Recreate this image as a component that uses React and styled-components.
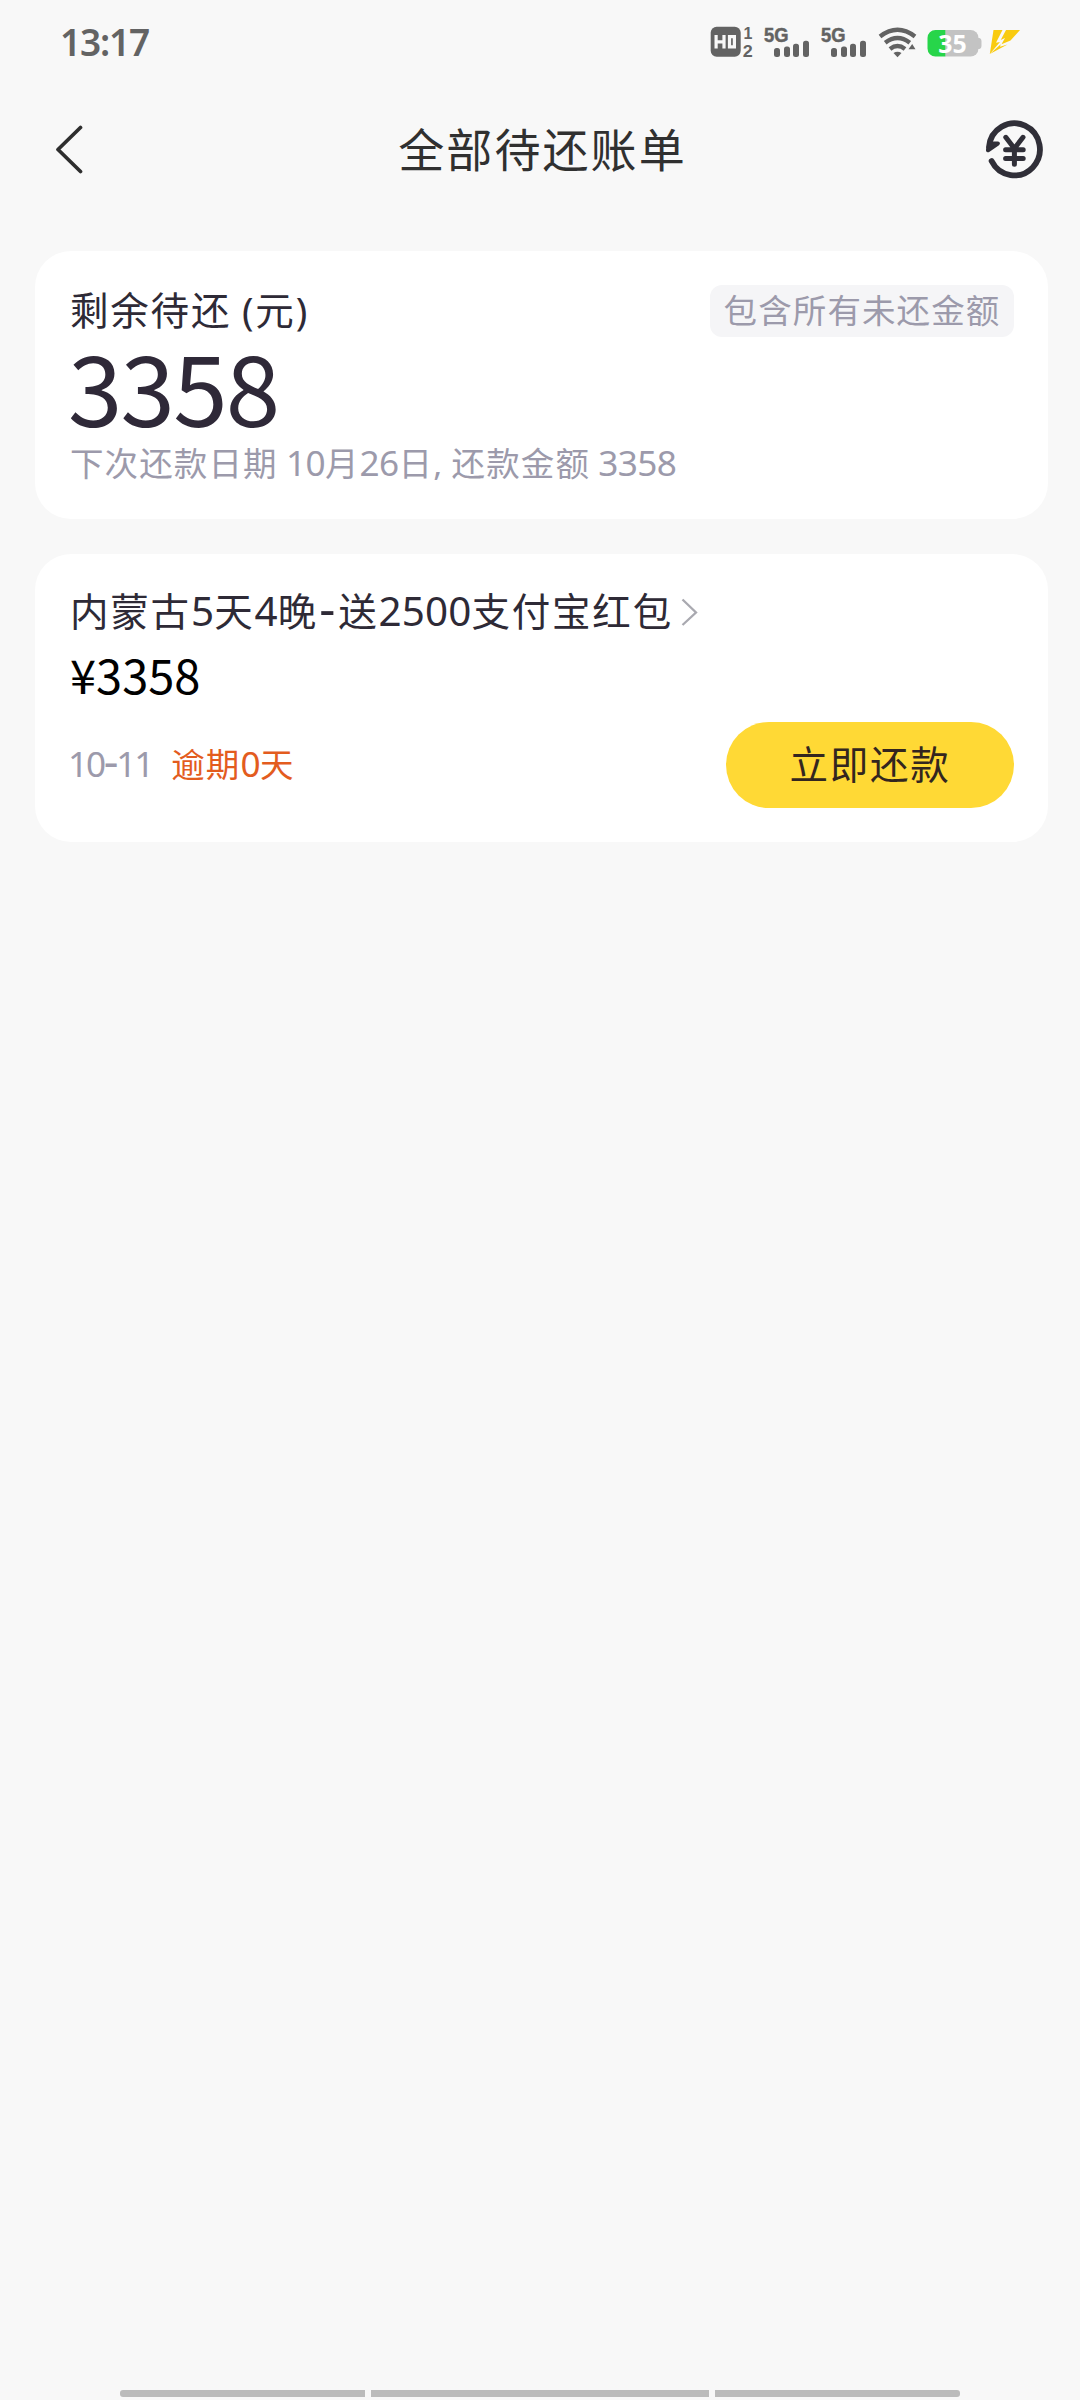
import React from 'react'
import styled, { createGlobalStyle } from 'styled-components'

const GlobalStyle = createGlobalStyle`
    * {
        box-sizing: border-box;
    }
    body {
        margin: 0;
        background: #f8f8f8;
        font-family: "Noto Sans", "Noto Sans CJK SC", sans-serif;
    }
`

const Page = styled.div`
    width: 1080px;
    height: 2400px;
    display: flex;
    flex-direction: column;
    background: #f8f8f8;
    overflow: hidden;
`

const StatusBar = styled.div`
    height: 84px;
    padding: 0 60px 0 60px;
    display: flex;
    justify-content: space-between;
`

const Time = styled.div`
    font-size: 37px;
    line-height: 84px;
    font-weight: 600;
    letter-spacing: -1.2px;
    color: #636363;
`

const StatusIcons = styled.div`
    display: flex;
    align-items: flex-start;
    padding-top: 26px;
`

const StatusIcon = styled.svg`
    display: block;
    margin-left: ${props => props.$gap || 0}px;
    overflow: visible;
    font-family: "Liberation Sans", sans-serif;
    font-weight: 700;
`

const NavBar = styled.div`
    height: 132px;
    padding: 0 36px 0 54px;
    display: grid;
    grid-template-columns: 60px 1fr 60px;
    align-items: center;
`

const Title = styled.h1`
    margin: 0;
    padding: 0 15px 2px 2px;
    font-size: 46px;
    line-height: 58px;
    font-weight: 400;
    letter-spacing: 2.1px;
    text-align: center;
    color: #303030;
`

const NavIcon = styled.svg`
    display: block;
`

const CardList = styled.div`
    flex: 1;
    padding: 35px 32px 0 35px;
    display: flex;
    flex-direction: column;
    gap: 35px;
`

const Card = styled.div`
    height: ${props => props.$height}px;
    padding: 34px 34px 0 35px;
    border-radius: 36px;
    background: #fff;
`

const Row = styled.div`
    display: flex;
    align-items: center;
    justify-content: ${props => (props.$spread ? 'space-between' : 'flex-start')};
    height: ${props => props.$height}px;
`

const Label = styled.div`
    padding-bottom: 2px;
    font-size: 38.5px;
    line-height: 46px;
    letter-spacing: 1.8px;
    word-spacing: -1px;
    white-space: nowrap;
    color: #2e2a36;
`

const Badge = styled.div`
    width: 304px;
    height: 52px;
    border-radius: 12px;
    background: #f5f5f7;
    text-align: center;
    font-size: 33.5px;
    line-height: 51px;
    letter-spacing: 1.1px;
    color: #9c9aab;
`

const Num = styled.span`
    font-size: 1.05em;
    line-height: 1;
    letter-spacing: ${props => props.$tight || -0.6}px;
`

const Dash = styled.span`
    margin: 0 ${props => props.$space || 0}px;
    font-size: 1.3em;
    line-height: 0.8;
`

const Total = styled.div`
    height: 102px;
    margin-left: -2px;
    font-family: "Noto Sans CJK SC", sans-serif;
    font-size: 98px;
    line-height: 94px;
    letter-spacing: -1.8px;
    color: #2f2938;
`

const Note = styled.div`
    font-size: 33.5px;
    line-height: 49px;
    letter-spacing: 1.1px;
    word-spacing: -1.5px;
    white-space: nowrap;
    color: #9c9aab;
`

const DueDate = styled(Note)`
    margin-left: -2px;
    padding-bottom: 2px;
`

const Price = styled.div`
    height: 84px;
    font-family: "Noto Sans CJK SC", sans-serif;
    font-size: 47px;
    line-height: 80px;
    color: #000;
`

const Overdue = styled.span`
    margin-left: 19px;
    color: #e35c1e;
`

const PayButton = styled.button`
    width: 288px;
    height: 86px;
    padding: 0 0 2px;
    border: none;
    border-radius: 43px;
    background: #ffd935;
    font-family: inherit;
    font-size: 38.5px;
    line-height: 82px;
    letter-spacing: 1.8px;
    color: #33261f;
`

const Footer = styled.div`
    display: flex;
    gap: 6px;
    height: 10px;
    padding: 0 120px;
`

const Bar = styled.div`
    flex: ${props => props.$grow} 1 0;
    height: 7px;
    background: #bbb;
    border-radius: ${props => props.$radius || '0'};
`

function HdIcon() {
    return (
        <StatusIcon width="44" height="32" viewBox="0 0 44 32" fill="#636363">
            <rect x="0.7" y="0.7" width="30" height="30" rx="6" />
            <path
                d="M6.1 9v13.4M14 9v13.4M6.1 15.8h8M19.5 10.6h4.9v10.2h-4.9z"
                fill="none"
                stroke="#f8f8f8"
                strokeWidth="3.2"
            />
            <text x="33.6" y="12.6" fontSize="16">1</text>
            <text x="32.8" y="30.5" fontSize="16" textLength="10" lengthAdjust="spacingAndGlyphs">2</text>
        </StatusIcon>
    )
}

function SignalIcon({ gap }) {
    return (
        <StatusIcon $gap={gap} width="46" height="32" viewBox="0 0 46 32" fill="#636363">
            <text x="0" y="16" fontSize="20.5" textLength="24.5" lengthAdjust="spacingAndGlyphs" stroke="#636363" strokeWidth="0.5">5G</text>
            <rect x="10" y="22" width="6" height="9" rx="2.5" />
            <rect x="20" y="20.5" width="6" height="10.5" rx="2.5" />
            <rect x="29" y="17.8" width="6" height="13.2" rx="2.5" />
            <rect x="39" y="14.8" width="6" height="16.2" rx="2.5" />
        </StatusIcon>
    )
}

function WifiIcon() {
    return (
        <StatusIcon $gap={11} width="40" height="32" viewBox="0 0 40 32">
            <g fill="none" stroke="#636363" strokeWidth="4.4">
                <path d="M2 10.4Q19.5 -3 37 10.4" />
                <path d="M7.2 16.8Q19.5 7.4 31.8 16.8" />
                <path d="M12 22.9Q19.5 17 27 22.9" />
            </g>
            <path d="M15.5 27Q19.5 24.5 23.5 27L19.5 31.2z" fill="#636363" />
            <path d="M30.5 23.2L34.2 18L37.5 23.2z" fill="#636363" />
        </StatusIcon>
    )
}

function BatteryIcon() {
    return (
        <StatusIcon $gap={9} width="56" height="34" viewBox="0 0 56 34">
            <path d="M51 12h1.5q2 .5 2 3v5q0 2.5-2 3H51z" fill="#c3c3c3" />
            <path d="M18 4h25.5a8 8 0 0 1 8 8v10.5a8 8 0 0 1-8 8H18z" fill="#c3c3c3" />
            <path d="M18.3 4H8.5a8 8 0 0 0-8 8v10.5a8 8 0 0 0 8 8h9.8z" fill="#27d54a" />
            <text
                x="11.2"
                y="26.5"
                fontFamily="Noto Sans"
                fontSize="25.5"
                fill="#fff"
                textLength="28.5"
                lengthAdjust="spacingAndGlyphs"
            >35</text>
        </StatusIcon>
    )
}

function BoltIcon() {
    return (
        <StatusIcon $gap={5} width="32" height="34" viewBox="0 0 32 34" fill="#f9cb10">
            <path d="M5.5 4H14.5L8 16.7L12 16L1.8 28z" />
            <path d="M18 4H32L22.5 14.5L13.5 18.2L17 12L12.7 14z" />
            <path d="M1.8 28L12.7 18.2L12 20.7L19.5 18.5z" />
        </StatusIcon>
    )
}

function BackIcon() {
    return (
        <NavIcon width="32" height="50" viewBox="0 0 32 50" fill="none">
            <path
                d="M26.5 2.5L4 24.5L26.5 46.5"
                stroke="#2e2e2e"
                strokeWidth="3.7"
                strokeLinecap="round"
                strokeLinejoin="round"
            />
        </NavIcon>
    )
}

function RecordIcon() {
    return (
        <NavIcon width="60" height="62" viewBox="0 0 60 62" fill="none" stroke="#302f38" strokeLinecap="round" strokeLinejoin="round">
            <path d="M7.6 42A25.5 26 0 1 0 5 28" strokeWidth="5.8" />
            <path d="M4 31.2L13.8 24.5L6 24.5z" fill="#302f38" strokeWidth="4.2" />
            <path d="M21.8 18.3L30.4 29.5L39 18.3M30.4 30V45.3M21.6 30.7H39.2M21.6 39.5H39.2" strokeWidth="5" />
        </NavIcon>
    )
}

const ArrowIcon = styled.svg`
    margin: 2px 0 0 8px;
`

function App() {
    return (
        <Page>
            <GlobalStyle />
            <StatusBar>
                <Time>13:17</Time>
                <StatusIcons>
                    <HdIcon />
                    <SignalIcon gap={10} />
                    <SignalIcon gap={11} />
                    <WifiIcon />
                    <BatteryIcon />
                    <BoltIcon />
                </StatusIcons>
            </StatusBar>

            <NavBar>
                <BackIcon />
                <Title>全部待还账单</Title>
                <RecordIcon />
            </NavBar>

            <CardList>
                <Card $height={268}>
                    <Row $spread $height={52}>
                        <Label>剩余待还 (元)</Label>
                        <Badge>包含所有未还金额</Badge>
                    </Row>
                    <Total>3358</Total>
                    <Note>
                        下次还款日期 <Num>10</Num>月<Num>26</Num>日, 还款金额 <Num>3358</Num>
                    </Note>
                </Card>

                <Card $height={288}>
                    <Row $height={46}>
                        <Label>
                            内蒙古<Num $tight={0.1}>5</Num>天<Num $tight={0.1}>4</Num>晚<Dash $space={1.2}>-</Dash>送<Num $tight={0.1}>2500</Num>支付宝红包
                        </Label>
                        <ArrowIcon width="18" height="30" viewBox="0 0 18 30" fill="none">
                            <path d="M1.5 2.5L15 15.5L1.5 28" stroke="#a9a9b0" strokeWidth="2.3" />
                        </ArrowIcon>
                    </Row>
                    <Price>¥3358</Price>
                    <Row $spread $height={94}>
                        <DueDate>
                            <Num $tight={-2.2}>10<Dash>-</Dash>11</Num>
                            <Overdue>逾期<Num>0</Num>天</Overdue>
                        </DueDate>
                        <PayButton>立即还款</PayButton>
                    </Row>
                </Card>
            </CardList>

            <Footer>
                <Bar $grow={245} $radius="3px 0 0 3px" />
                <Bar $grow={338} />
                <Bar $grow={245} $radius="0 3px 3px 0" />
            </Footer>
        </Page>
    )
}

export default App
